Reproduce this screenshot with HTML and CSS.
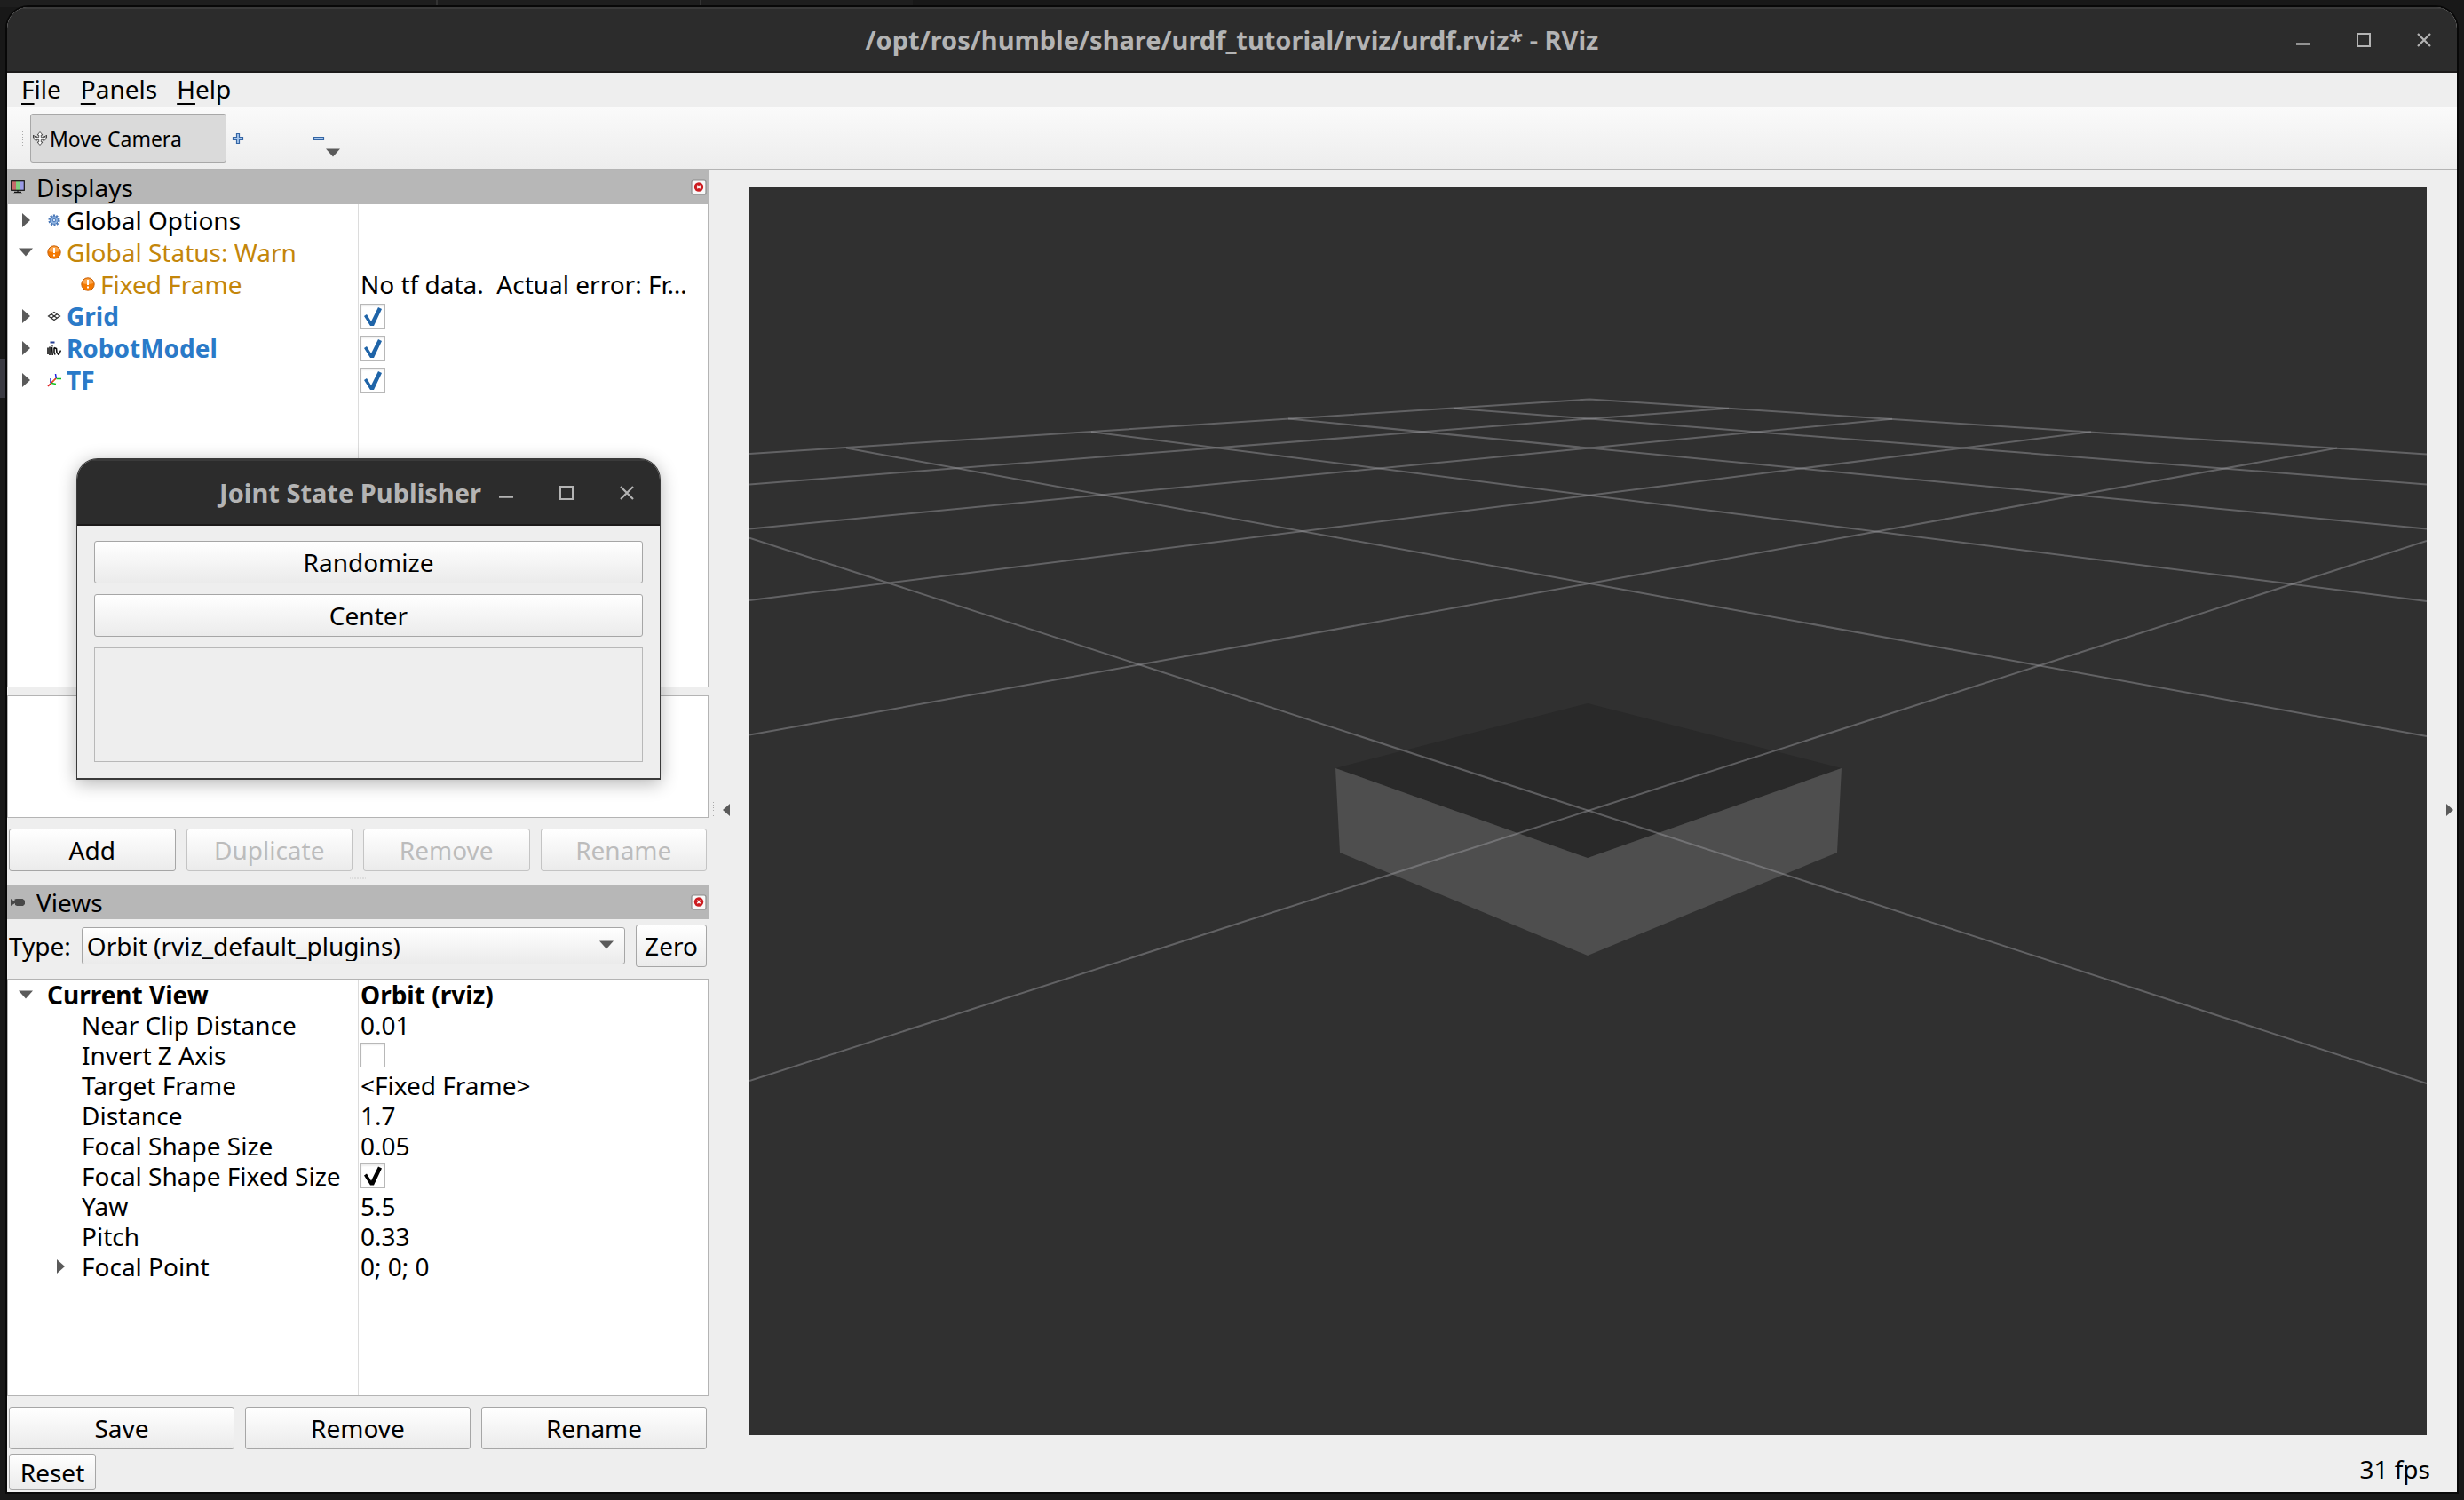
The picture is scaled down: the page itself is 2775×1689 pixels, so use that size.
FILE: index.html
```html
<!DOCTYPE html>
<html lang="en">
<head>
<meta charset="utf-8">
<title>RViz</title>
<link rel="stylesheet" href="styles.css">
</head>
<body>
<svg class="defs" width="0" height="0" aria-hidden="true">
  <symbol id="win-min" viewBox="0 0 16 16"><path d="M0 12.5h16" stroke="currentColor" stroke-width="2.5"/></symbol>
  <symbol id="win-max" viewBox="0 0 16 16"><rect x="1" y="1" width="14" height="14" fill="none" stroke="currentColor" stroke-width="2"/></symbol>
  <symbol id="win-close" viewBox="0 0 16 16"><path d="M1 1l14 14M15 1L1 15" stroke="currentColor" stroke-width="2.2"/></symbol>
  <symbol id="tri-right" viewBox="0 0 16 16"><path d="M4 0l9 8-9 8z" fill="#5a5a5a"/></symbol>
  <symbol id="tri-down" viewBox="0 0 16 16"><path d="M0 3.500h16l-8 9z" fill="#5a5a5a"/></symbol>
  <symbol id="dock-close" viewBox="0 0 18 18"><rect x="1" y="1" width="16" height="16" rx="2" fill="#f8f8f8" stroke="#8c8c8c" stroke-width="1.200"/><circle cx="9" cy="8.500" r="5.200" fill="#cc1c20"/><path d="M7.300 6.800l3.400 3.400M10.700 6.800l-3.400 3.400" stroke="#fff" stroke-width="1.400"/></symbol>
  <symbol id="warn" viewBox="0 0 16 16"><circle cx="8" cy="8" r="7.200" fill="#f57900" stroke="#c4620c"/><path d="M2 7a6 5.500 0 0 1 12 0q-6 2-12 0z" fill="#fba64e"/><path d="M8 3v6M8 10.500v2" stroke="#fff" stroke-width="2"/></symbol>
  <symbol id="move" viewBox="0 0 16 16"><path d="M8 .5l3 3.500H9.300v2.700H12V5l3.500 3-3.500 3V9.300H9.300V12H11l-3 3.500L5 12h1.700V9.300H4V11L.5 8 4 5v1.700h2.700V4H5z" fill="#fff" stroke="#444" stroke-width=".9"/><path d="M.5 4v3M15.500 4v3M.5 4.500l4 2M15.500 4.500l-4 2" stroke="#444"/></symbol>
  <symbol id="plus" viewBox="0 0 16 16"><path d="M6.500 2.500h3v4h4v3h-4v4h-3v-4h-4v-3h4z" fill="#a8c8ee" stroke="#3465a4" stroke-width="1.200"/></symbol>
  <symbol id="minus" viewBox="0 0 16 16"><path d="M2.500 6.500h11v3h-11z" fill="#a8c8ee" stroke="#3465a4" stroke-width="1.200"/></symbol>
  <symbol id="monitor" viewBox="0 0 16 16"><path d="M1 1h5v10H1z" fill="#c46a6a"/><path d="M6 1h4v10H6z" fill="#7fcf7f"/><path d="M10 1h5v10h-5z" fill="#9a9ae6"/><rect x=".7" y=".7" width="14.600" height="10.600" fill="none" stroke="#111" stroke-width="1.200"/><path d="M8 11v3M4 13.300h8M3 15.300h10" stroke="#111" stroke-width="1.200"/></symbol>
  <symbol id="camera" viewBox="0 0 16 16"><path d="M0 4l4.500 3V4.500L6.500 4h7L16 6v4l-2 2H7l-2-1V9L0 12z" fill="#484848"/></symbol>
  <symbol id="gear" viewBox="0 0 16 16"><circle cx="8" cy="8" r="5.500" fill="none" stroke="#4a78b8" stroke-width="2.200" stroke-dasharray="2.100 1.350"/><circle cx="8" cy="8" r="4.400" fill="#94b8e4" stroke="#4a78b8"/><circle cx="8" cy="8" r="1.800" fill="#d4e4f8" stroke="#4a78b8"/></symbol>
  <symbol id="grid" viewBox="0 0 16 16"><path d="M8 3.500L14.500 8 8 12.500 1.500 8zM4.800 5.700l6.500 4.500M11.200 5.700L4.700 10.200" fill="none" stroke="#333" stroke-width="1.200"/></symbol>
  <symbol id="robot" viewBox="0 0 16 16"><path d="M3.500 1.500h5" stroke="#223a90" stroke-width="2"/><path d="M3.500 4.500h5M6 4.500v2" stroke="#222" stroke-width="1.200"/><path d="M1 7.500V15M3 6.500V16M5.500 7l.7 9M8 7.500V13l1 2.500M8 7.500l2.500 1L11 13l2 2.500 2.500-5" fill="none" stroke="#111" stroke-width="1.600"/></symbol>
  <symbol id="axes" viewBox="0 0 16 16"><path d="M5 11l5-5M5 11l-4 4" stroke="#e02020" stroke-width="1.700"/><path d="M4 6v5M9.500 1l.8 5" stroke="#2020e0" stroke-width="1.500"/><path d="M5 11.500l5 1M10.500 6.500H16" stroke="#10c020" stroke-width="1.500"/><path d="M7 9.500l2-2" stroke="#e8b820"/></symbol>
</svg>

<div class="window">
  <header class="titlebar">
    <h1 class="title">/opt/ros/humble/share/urdf_tutorial/rviz/urdf.rviz* - RViz</h1>
    <div class="controls">
      <button class="icon-btn" aria-label="Minimize"><svg class="i16"><use href="#win-min"/></svg></button>
      <button class="icon-btn" aria-label="Maximize"><svg class="i16"><use href="#win-max"/></svg></button>
      <button class="icon-btn" aria-label="Close"><svg class="i16"><use href="#win-close"/></svg></button>
    </div>
  </header>
  <nav class="menubar">
    <button class="menu"><u>F</u>ile</button>
    <button class="menu"><u>P</u>anels</button>
    <button class="menu"><u>H</u>elp</button>
  </nav>
  <div class="toolbar">
    <span class="grip"></span>
    <button class="tool active"><svg class="i16"><use href="#move"/></svg>Move Camera</button>
    <button class="icon-btn tool-add" aria-label="Add tool"><svg class="i16"><use href="#plus"/></svg></button>
    <button class="icon-btn tool-remove" aria-label="Remove tool"><svg class="i16"><use href="#minus"/></svg><svg class="i16 drop"><use href="#tri-down"/></svg></button>
  </div>

  <main class="workspace">
    <div class="docks">
      <section class="dock displays">
        <h2 class="dock-title"><svg class="i16"><use href="#monitor"/></svg><span>Displays</span><button class="icon-btn" aria-label="Close Displays"><svg class="i18"><use href="#dock-close"/></svg></button></h2>
        <div class="pane tree-pane">
          <table class="tree tall">
            <tr><td><div class="name"><svg class="i16"><use href="#tri-right"/></svg><svg class="i16 kind"><use href="#gear"/></svg>Global Options</div></td><td></td></tr>
            <tr><td><div class="name warn"><svg class="i16"><use href="#tri-down"/></svg><svg class="i16 kind"><use href="#warn"/></svg>Global Status: Warn</div></td><td></td></tr>
            <tr><td><div class="name warn leaf"><svg class="i16 kind"><use href="#warn"/></svg>Fixed Frame</div></td><td>No tf data.&nbsp; Actual error: Fr…</td></tr>
            <tr><td><div class="name on"><svg class="i16"><use href="#tri-right"/></svg><svg class="i16 kind"><use href="#grid"/></svg><label for="c-grid">Grid</label></div></td><td><input class="check blue" type="checkbox" id="c-grid" checked></td></tr>
            <tr><td><div class="name on"><svg class="i16"><use href="#tri-right"/></svg><svg class="i16 kind"><use href="#robot"/></svg><label for="c-robot">RobotModel</label></div></td><td><input class="check blue" type="checkbox" id="c-robot" checked></td></tr>
            <tr><td><div class="name on"><svg class="i16"><use href="#tri-right"/></svg><svg class="i16 kind"><use href="#axes"/></svg><label for="c-tf">TF</label></div></td><td><input class="check blue" type="checkbox" id="c-tf" checked></td></tr>
          </table>
        </div>
        <div class="pane help-pane"></div>
        <div class="buttons">
          <button class="btn">Add</button>
          <button class="btn" disabled>Duplicate</button>
          <button class="btn" disabled>Remove</button>
          <button class="btn" disabled>Rename</button>
        </div>
      </section>
      <div class="splitter"></div>
      <section class="dock views">
        <h2 class="dock-title"><svg class="i16"><use href="#camera"/></svg><span>Views</span><button class="icon-btn" aria-label="Close Views"><svg class="i18"><use href="#dock-close"/></svg></button></h2>
        <div class="type-row">
          <label for="view-type">Type:</label>
          <div class="combo"><select id="view-type"><option>Orbit (rviz_default_plugins)</option></select><svg class="i16"><use href="#tri-down"/></svg></div>
          <button class="btn">Zero</button>
        </div>
        <div class="pane tree-pane">
          <table class="tree">
            <tr class="strong"><td><div class="name"><svg class="i16"><use href="#tri-down"/></svg>Current View</div></td><td>Orbit (rviz)</td></tr>
            <tr><td><div class="name child">Near Clip Distance</div></td><td>0.01</td></tr>
            <tr><td><div class="name child"><label for="c-inv">Invert Z Axis</label></div></td><td><input class="check" type="checkbox" id="c-inv"></td></tr>
            <tr><td><div class="name child">Target Frame</div></td><td>&lt;Fixed Frame&gt;</td></tr>
            <tr><td><div class="name child">Distance</div></td><td>1.7</td></tr>
            <tr><td><div class="name child">Focal Shape Size</div></td><td>0.05</td></tr>
            <tr><td><div class="name child"><label for="c-fix">Focal Shape Fixed Size</label></div></td><td><input class="check" type="checkbox" id="c-fix" checked></td></tr>
            <tr><td><div class="name child">Yaw</div></td><td>5.5</td></tr>
            <tr><td><div class="name child">Pitch</div></td><td>0.33</td></tr>
            <tr><td><div class="name branch"><svg class="i16"><use href="#tri-right"/></svg>Focal Point</div></td><td>0; 0; 0</td></tr>
          </table>
        </div>
        <div class="buttons">
          <button class="btn">Save</button>
          <button class="btn">Remove</button>
          <button class="btn">Rename</button>
        </div>
      </section>
    </div>
    <div class="gutter"><span class="dots"></span><svg width="8" height="14" viewBox="0 0 8 14"><path d="M8 0v14L0 7z" fill="#5a5a5a"/></svg></div>
    <div class="viewport">
      <svg class="scene" viewBox="844 210 1889 1406" preserveAspectRatio="xMidYMid slice" role="img" aria-label="3D view">
        <path d="M1504 865l284-73 286 73-286 101z" fill="#292929"/>
        <path d="M1504 865l284 101 286-101-5 95-281 116-279-116z" fill="#4e4e4e"/>
        <g class="lines">
          <path d="M844 511L1790 449.500 2733 511.500"/>
          <path d="M1637 459.700L1790 471.500 2733 545.500M1451 471.500L1790 504.600 2733 595.500M1229 486.300L1790 557.700 2733 677M953 504.600L1790 657 2733 829M844 605.600L1789 912.800 2733 1220"/>
          <path d="M1947 459.700L1790 471.500 844 545.400M2131 471.700L1790 504.600 844 595.400M2355 486.300L1790 557.700 844 676M2632 504.600L1790 657 844 827.600M2733 609L1789 912.800 844 1217"/>
        </g>
      </svg>
    </div>
    <div class="gutter end"><svg width="8" height="14" viewBox="0 0 8 14"><path d="M0 0v14l8-7z" fill="#5a5a5a"/></svg></div>
  </main>

  <footer class="status">
    <button class="btn reset">Reset</button>
    <span>31 fps</span>
  </footer>
</div>

<section class="dialog">
  <header class="titlebar">
    <h2 class="title">Joint State Publisher</h2>
    <div class="controls">
      <button class="icon-btn" aria-label="Minimize"><svg class="i16"><use href="#win-min"/></svg></button>
      <button class="icon-btn" aria-label="Maximize"><svg class="i16"><use href="#win-max"/></svg></button>
      <button class="icon-btn" aria-label="Close"><svg class="i16"><use href="#win-close"/></svg></button>
    </div>
  </header>
  <div class="dialog-body">
    <button class="btn">Randomize</button>
    <button class="btn">Center</button>
    <div class="joints"></div>
  </div>
</section>
</body>
</html>
```

FILE: styles.css
```css
* { box-sizing: border-box; }

body {
  margin: 0;
  min-height: 100vh;
  display: flex;
  position: relative;
  font: 28px/34px "Noto Sans", sans-serif;
  color: #000;
  background:
    linear-gradient(#3a3a42, #3a3a42) 0 404px / 8px 44px no-repeat,
    linear-gradient(#333, #333) 491px 0 / 2px 8px no-repeat,
    linear-gradient(#333, #333) 788px 0 / 2px 8px no-repeat,
    linear-gradient(#1e1e1e, #1e1e1e) 0 0 / 1028px 8px no-repeat,
    #181818;
}

button, select { font: inherit; color: inherit; }
svg { display: block; flex: none; }
.defs { position: absolute; }
.i16 { width: 16px; height: 16px; }
.i18 { width: 18px; height: 18px; }
.icon-btn { display: flex; padding: 0; border: 0; background: none; }

.window {
  flex: 1;
  min-width: 0;
  display: flex;
  flex-direction: column;
  margin: 8px 8px 9px;
  background: #eee;
  border-radius: 24px 24px 0 0;
  overflow: hidden;
  box-shadow: 0 0 0 2px #080808;
}

.titlebar {
  flex: none;
  height: 74px;
  display: grid;
  grid-template-columns: 1fr auto 1fr;
  align-items: center;
  padding: 0 29px;
  color: #b4b4b4;
  background: #2c2c2c;
  border-top: 2px solid #3a3a3a;
  border-bottom: 2px solid #1c1a1a;
}
.title { grid-column: 2; margin: 0; font-size: 29px; line-height: 38px; font-weight: 700; white-space: nowrap; }
.controls { display: flex; justify-content: flex-end; gap: 52px; }

.menubar {
  flex: none;
  display: flex;
  gap: 22px;
  height: 39px;
  padding: 1px 16px 3px;
  border-bottom: 1px solid #d0d0d0;
}
.menu { padding: 0; border: 0; background: none; line-height: 34px; }
.menu u { text-decoration-thickness: 2px; text-underline-offset: 5px; }

.toolbar {
  flex: none;
  display: flex;
  align-items: center;
  height: 70px;
  padding: 0 13px;
  background: linear-gradient(#fafafa, #ededed);
  border-bottom: 1px solid #b4b4b4;
}
.grip { width: 5px; height: 18px; margin-right: 8px; background: radial-gradient(#aaa 1px, transparent 1px) 0 0 / 3px 3px; }
.tool {
  display: flex;
  align-items: center;
  gap: 3px;
  width: 221px;
  height: 55px;
  padding: 0 2px;
  font-size: 23px;
  background: #dadada;
  border: 1px solid #a8a8a8;
  border-radius: 3px;
}
.tool-add { margin: 0 75px 0 5px; }
.tool-remove { align-items: center; }
.tool-remove .drop { margin-top: 32px; }

.workspace {
  flex: 1;
  display: grid;
  grid-template-columns: minmax(0, 790px) 46px minmax(0, 1fr) 34px;
}
.docks { display: flex; flex-direction: column; }
.dock { display: flex; flex-direction: column; }
.displays { flex: 789 1 0; }
.views { flex: 635 1 0; }
.dock-title {
  flex: none;
  display: flex;
  align-items: center;
  gap: 13px;
  height: 39px;
  margin: 0;
  padding: 0 2px 0 4px;
  font-size: 28px;
  font-weight: 400;
  background: #b7b7b7;
}
.views .dock-title { height: 38px; }
.dock-title .icon-btn { margin-left: auto; }

.pane { background-color: #fff; border: 1px solid #b4b4b4; }
.tree-pane {
  flex: 1;
  background-image: linear-gradient(#dcdcdc, #dcdcdc);
  background-size: 1px 100%;
  background-position: 50% 0;
  background-repeat: no-repeat;
}
.displays .tree-pane { border-top: 0; }
.help-pane { flex: none; height: 138px; margin-top: 9px; }

.tree { width: 100%; table-layout: fixed; border-collapse: collapse; }
.tree td { height: 34px; padding: 0 0 0 3px; line-height: 32px; white-space: nowrap; vertical-align: middle; }
.tree td:first-child { padding-left: 12px; }
.tree.tall td { height: 36px; }
.strong { font-weight: 700; }
.name { display: flex; align-items: center; gap: 16px; }
.name .kind { margin-right: -10px; }
.leaf { padding-left: 70px; }
.child { padding-left: 71px; }
.branch { padding-left: 39px; }
.warn { color: #c4860a; }
.on { color: #2a7ac8; font-weight: 700; }

.check {
  display: block;
  appearance: none;
  width: 28px;
  height: 28px;
  margin: 0;
  color: #000;
  background: #fff;
  border: 1px solid #b8b8b8;
  box-shadow: inset 0 2px 2px #eee;
}
.check.blue { color: #1f64a8; }
.check:checked::before {
  content: "";
  display: block;
  width: 26px;
  height: 26px;
  background: currentColor;
  clip-path: polygon(3px 13px, 6px 11px, 11px 19px, 19px 3px, 23px 5px, 14px 24px, 10px 24px);
}

.buttons { flex: none; display: flex; gap: 12px; padding: 12px 2px 0; }
.btn {
  flex: 1;
  height: 48px;
  padding: 0;
  background: linear-gradient(#fff, #ebebeb);
  border: 1px solid #a6a6a6;
  border-radius: 3px;
}
.btn:disabled { color: #bcbcbc; border-color: #c4c4c4; }

.splitter { flex: none; height: 16px; background: radial-gradient(#aaa 1px, transparent 1px) 50% 50% / 3px 3px; background-clip: content-box; padding: 7px calc(50% - 9px) 6px; }

.type-row { flex: none; display: flex; align-items: center; gap: 12px; padding: 6px 2px 13px; }
.combo { flex: 1; position: relative; }
.combo select {
  appearance: none;
  display: block;
  width: 100%;
  height: 42px;
  padding: 0 5px;
  background: linear-gradient(#fff, #ebebeb);
  border: 1px solid #a6a6a6;
  border-radius: 3px;
}
.combo .i16 { position: absolute; right: 13px; top: 12px; }
.type-row .btn { flex: 0 0 80px; }

.gutter { display: flex; align-items: center; gap: 10px; padding-left: 5px; }
.gutter.end { padding-left: 22px; }
.dots { width: 1px; height: 17px; background: repeating-linear-gradient(#aaa 0 1px, transparent 1px 3px); }
.viewport { margin: 19px 0 16px; position: relative; background: #303030; overflow: hidden; }
.scene { position: absolute; width: 100%; height: 100%; }
.lines { fill: none; stroke: #a0a0a4; stroke-opacity: 0.45; stroke-width: 2; }

.status {
  flex: none;
  display: flex;
  justify-content: space-between;
  align-items: flex-start;
  height: 48px;
  padding: 5px 30px 0 2px;
}
.reset { flex: 0 0 98px; height: 41px; }

.dialog {
  position: absolute;
  left: 86px;
  top: 516px;
  width: 658px;
  background: #eee;
  border: 1px solid #3a3a3a;
  border-bottom-width: 2px;
  border-radius: 24px 24px 0 0;
  overflow: hidden;
  box-shadow: 0 4px 20px rgba(0, 0, 0, 0.3);
}
.dialog .titlebar { display: flex; justify-content: flex-end; gap: 20px; height: 75px; }
.dialog-body { display: flex; flex-direction: column; gap: 12px; padding: 17px 19px 18px; }
.dialog .btn { flex: none; }
.joints { height: 129px; border: 1px solid #b8b8b8; }
```
